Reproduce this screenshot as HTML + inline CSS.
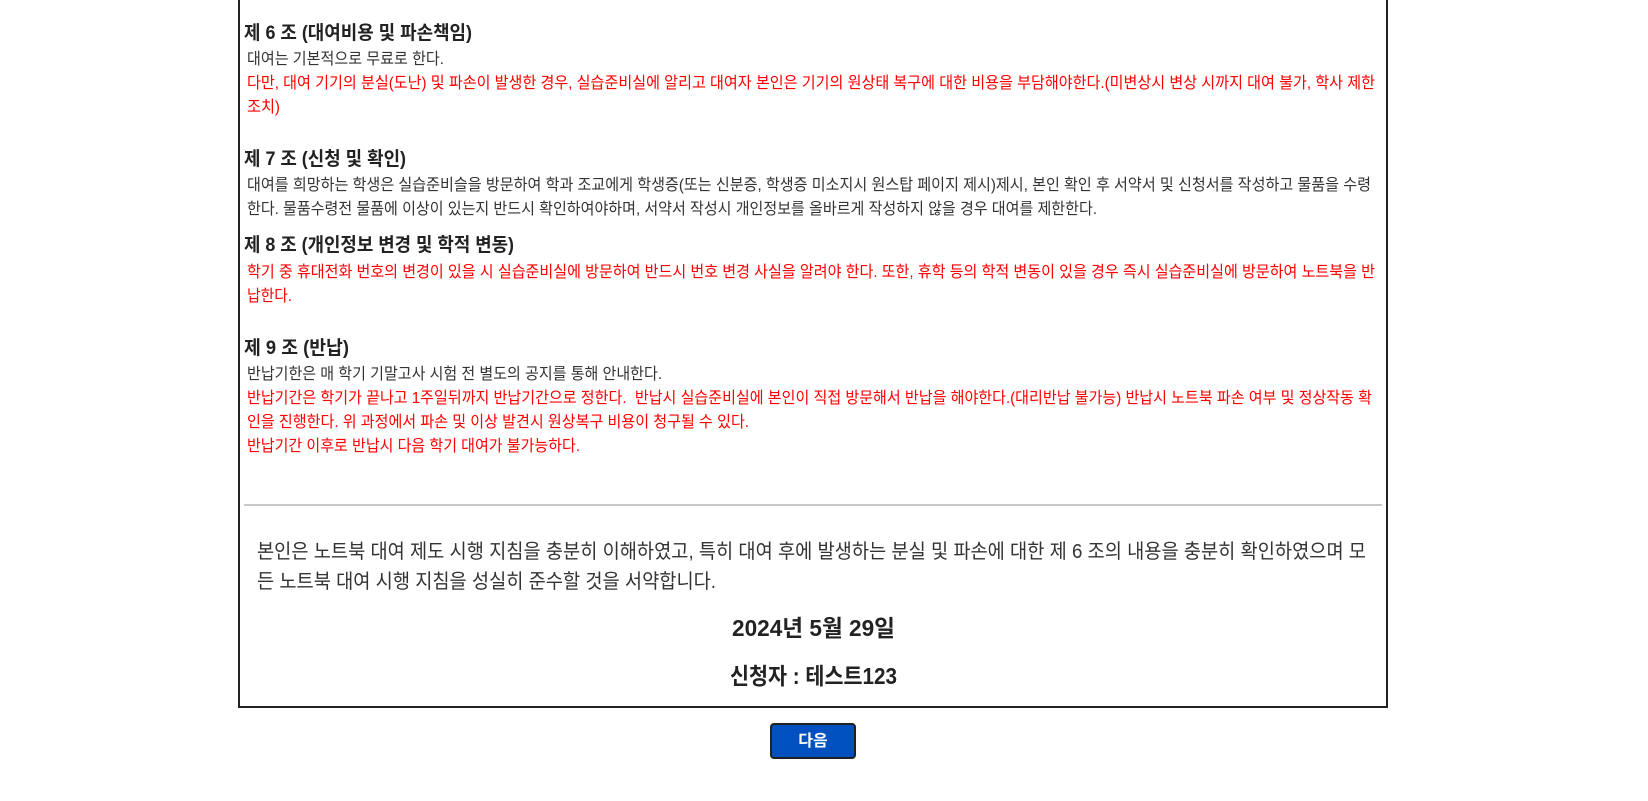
<!DOCTYPE html>
<html><head><meta charset="utf-8"><style>
html,body{margin:0;padding:0;background:#fff;width:1648px;height:801px;overflow:hidden;}
body{font-family:"Liberation Sans","Noto Sans CJK KR",sans-serif;position:relative;}
.box{position:absolute;left:238px;top:-5px;width:1146px;height:711px;border:2px solid #222;border-top:none;box-sizing:content-box;}
.l{position:absolute;white-space:nowrap;transform-origin:0 50%;line-height:1;}
.h{font-size:19px;font-weight:bold;color:#222;left:244px;}
.b{font-size:16px;color:#333;left:247px;}
.r{color:#ff0000;}
.a{font-size:20px;color:#333;left:257px;}
.c{font-size:23px;font-weight:bold;color:#222;}
.hr{position:absolute;left:244px;top:504px;width:1138px;height:2px;background:#c8c8c8;}
.btn{position:absolute;left:770px;top:723px;width:86px;height:36px;box-sizing:border-box;background:#0050bf;border:2px solid #222;border-radius:4px;color:#fff;font-size:16px;font-weight:bold;text-align:center;line-height:33px;}
</style></head><body>
<div class="box"></div>
<div class="l h" style="top:24px;--w:228">제 6 조 (대여비용 및 파손책임)</div>
<div class="l b" style="top:52px;--w:197">대여는 기본적으로 무료로 한다.</div>
<div class="l b r" style="top:76px;--w:1128">다만, 대여 기기의 분실(도난) 및 파손이 발생한 경우, 실습준비실에 알리고 대여자 본인은 기기의 원상태 복구에 대한 비용을 부담해야한다.(미변상시 변상 시까지 대여 불가, 학사 제한</div>
<div class="l b r" style="top:100px;--w:33">조치)</div>

<div class="l h" style="top:150px;--w:162">제 7 조 (신청 및 확인)</div>
<div class="l b" style="top:178px;--w:1124">대여를 희망하는 학생은 실습준비슬을 방문하여 학과 조교에게 학생증(또는 신분증, 학생증 미소지시 원스탑 페이지 제시)제시, 본인 확인 후 서약서 및 신청서를 작성하고 물품을 수령</div>
<div class="l b" style="top:202px;--w:850">한다. 물품수령전 물품에 이상이 있는지 반드시 확인하여야하며, 서약서 작성시 개인정보를 올바르게 작성하지 않을 경우 대여를 제한한다.</div>

<div class="l h" style="top:236px;--w:270">제 8 조 (개인정보 변경 및 학적 변동)</div>
<div class="l b r" style="top:265px;--w:1128">학기 중 휴대전화 번호의 변경이 있을 시 실습준비실에 방문하여 반드시 번호 변경 사실을 알려야 한다. 또한, 휴학 등의 학적 변동이 있을 경우 즉시 실습준비실에 방문하여 노트북을 반</div>
<div class="l b r" style="top:289px;--w:45">납한다.</div>

<div class="l h" style="top:339px;--w:105">제 9 조 (반납)</div>
<div class="l b" style="top:367px;--w:415">반납기한은 매 학기 기말고사 시험 전 별도의 공지를 통해 안내한다.</div>
<div class="l b r" style="top:391px;--w:1125">반납기간은 학기가 끝나고 1주일뒤까지 반납기간으로 정한다.&nbsp; 반납시 실습준비실에 본인이 직접 방문해서 반납을 해야한다.(대리반납 불가능) 반납시 노트북 파손 여부 및 정상작동 확</div>
<div class="l b r" style="top:415px;--w:502">인을 진행한다. 위 과정에서 파손 및 이상 발견시 원상복구 비용이 청구될 수 있다.</div>
<div class="l b r" style="top:439px;--w:333">반납기간 이후로 반납시 다음 학기 대여가 불가능하다.</div>

<div class="hr"></div>
<div class="l a" style="top:542px;--w:1109">본인은 노트북 대여 제도 시행 지침을 충분히 이해하였고, 특히 대여 후에 발생하는 분실 및 파손에 대한 제 6 조의 내용을 충분히 확인하였으며 모</div>
<div class="l a" style="top:572px;--w:459">든 노트북 대여 시행 지침을 성실히 준수할 것을 서약합니다.</div>
<div class="l c" style="top:617px;left:732px;--w:163">2024년 5월 29일</div>
<div class="l c" style="top:665px;left:730px;--w:167">신청자 : 테스트123</div>

<div class="btn">다음</div>
<script>
document.querySelectorAll('.l').forEach(function(e){
  var w=parseFloat(getComputedStyle(e).getPropertyValue('--w'));
  if(!w)return;
  var cw=e.getBoundingClientRect().width;
  if(cw>0)e.style.transform='scaleX('+(w/cw)+')';
});
</script>
</body></html>
